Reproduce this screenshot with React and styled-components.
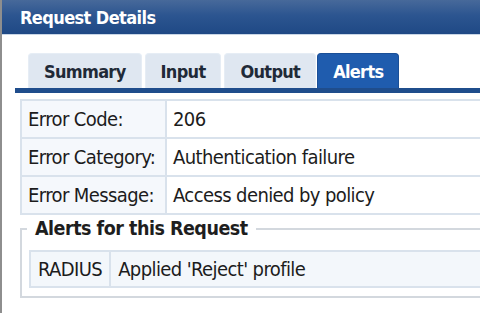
import React from "react";
import styled, { createGlobalStyle } from "styled-components";

const GlobalStyle = createGlobalStyle`
  html, body {
    margin: 0;
    padding: 0;
    background: #ffffff;
    overflow: hidden;
  }
  body {
    font-family: "DejaVu Sans Condensed", "DejaVu Sans", Verdana, sans-serif;
  }
`;

const Window = styled.div`
  width: 480px;
  height: 313px;
  box-sizing: border-box;
  border-left: 2px solid #8e8e8e;
  background: #ffffff;
  overflow: hidden;
`;

const TitleBar = styled.div`
  height: 34px;
  display: flex;
  align-items: center;
  padding-left: 18px;
  background: linear-gradient(to bottom, #47699a 0%, #2c5590 45%, #1f4985 100%);
  border-bottom: 1px solid #c9d6e6;
  color: #ffffff;
  font-weight: bold;
  font-size: 18px;
  letter-spacing: -0.6px;
`;

const Content = styled.div`
  padding: 18px 0 0 13px;
`;

const TabStrip = styled.div`
  display: flex;
  align-items: flex-end;
  gap: 3px;
  padding-left: 13px;
  border-bottom: 5px solid #1f4d8c;
`;

const Tab = styled.div`
  height: 35px;
  box-sizing: border-box;
  display: flex;
  align-items: center;
  padding: 0 15px;
  margin-left: ${p => (p.active ? "-2px" : "0")};
  border-radius: 4px 4px 0 0;
  font-weight: bold;
  font-size: 18px;
  letter-spacing: -0.7px;
  background: ${p => (p.active ? "#1f5cae" : "#dfe7f1")};
  color: ${p => (p.active ? "#ffffff" : "#1f2a38")};
  border: 1px solid ${p => (p.active ? "#1a4f97" : "#e6edf5")};
  border-bottom: none;
`;

const Table = styled.table`
  border-collapse: collapse;
  width: 520px;
  margin: 6px 0 0 5px;
  font-size: 20px;
  letter-spacing: -0.6px;
  color: #1c1c1c;
`;

const Label = styled.td`
  width: 131px;
  height: 36px;
  padding: 0 6px;
  background: #f5f8fc;
  border: 2px solid #d9e2ec;
  white-space: nowrap;
`;

const Value = styled.td`
  padding: 0 6px;
  background: #ffffff;
  border: 2px solid #d9e2ec;
  white-space: nowrap;
`;

const Fieldset = styled.fieldset`
  margin: 2px 0 0 5px;
  width: 520px;
  box-sizing: border-box;
  padding: 10px 0 8px 7px;
  border: 2px solid #d3d8de;
`;

const Legend = styled.legend`
  margin-left: -2px;
  padding: 0 8px;
  font-weight: bold;
  font-size: 19.5px;
  letter-spacing: -0.5px;
  color: #1e1e1e;
`;

const AlertTable = styled.table`
  border-collapse: collapse;
  width: 100%;
  font-size: 20px;
  letter-spacing: -0.6px;
  color: #1c1c1c;
`;

const AlertCell = styled.td`
  height: 34px;
  padding: 0 7px;
  background: #f3f7fb;
  border: 2px solid #d9e2ec;
  white-space: nowrap;
  width: ${p => (p.narrow ? "64px" : "auto")};
`;

const tabs = ["Summary", "Input", "Output", "Alerts"];

const rows = [
  ["Error Code:", "206"],
  ["Error Category:", "Authentication failure"],
  ["Error Message:", "Access denied by policy"]
];

export default function App() {
  return (
    <Window>
      <GlobalStyle />
      <TitleBar>Request Details</TitleBar>
      <Content>
        <TabStrip>
          {tabs.map(t => (
            <Tab key={t} active={t === "Alerts"}>
              {t}
            </Tab>
          ))}
        </TabStrip>
        <Table>
          <tbody>
            {rows.map(([k, v]) => (
              <tr key={k}>
                <Label>{k}</Label>
                <Value>{v}</Value>
              </tr>
            ))}
          </tbody>
        </Table>
        <Fieldset>
          <Legend>Alerts for this Request</Legend>
          <AlertTable>
            <tbody>
              <tr>
                <AlertCell narrow>RADIUS</AlertCell>
                <AlertCell>Applied 'Reject' profile</AlertCell>
              </tr>
            </tbody>
          </AlertTable>
        </Fieldset>
      </Content>
    </Window>
  );
}
